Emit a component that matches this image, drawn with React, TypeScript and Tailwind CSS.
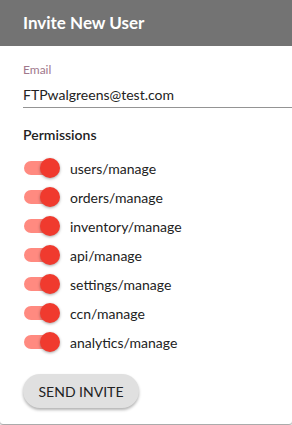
const permissions = [
  'users/manage',
  'orders/manage',
  'inventory/manage',
  'api/manage',
  'settings/manage',
  'ccn/manage',
  'analytics/manage',
];

function Toggle() {
  return (
    <span className="relative inline-block h-5 w-[38px] shrink-0">
      <span className="absolute left-[1px] top-[3px] h-[14px] w-[34px] rounded-full bg-[#ff8a80]" />
      <span className="absolute left-[17px] top-0 h-5 w-5 rounded-full bg-[#f03a2e] shadow-[0_1px_3px_rgba(0,0,0,0.35)]" />
    </span>
  );
}

export default function App() {
  return (
    <div className="h-[425px] w-[292px] overflow-hidden bg-white font-['Lato','Open_Sans',sans-serif] text-[#222]">
      <div className="h-[424px] overflow-hidden rounded-b-[3px] bg-white shadow-[0_1px_2px_rgba(0,0,0,0.45)]">
        <header className="flex h-[46px] items-center bg-[#737373] px-[23px]">
          <h1 className="text-[17px] font-bold text-white">Invite New User</h1>
        </header>

        <div className="pl-[23px]">
          <div className="mt-[17px] border-b border-[#949494] pb-[2px]">
            <label className="block text-[12px] leading-[14px] text-[#a0788c]">Email</label>
            <div className="mt-[8px] text-[14px] leading-[20px]">FTPwalgreens@test.com</div>
          </div>

          <h2 className="mt-[17px] text-[14px] font-semibold leading-[20px]">Permissions</h2>

          <ul className="mt-[13px] flex flex-col gap-[9px]">
            {permissions.map((p) => (
              <li key={p} className="flex h-5 items-center gap-[9px]">
                <Toggle />
                <span className="text-[14px]">{p}</span>
              </li>
            ))}
          </ul>

          <button
            type="button"
            className="mt-[22px] h-[34px] w-[116px] rounded-full bg-[#e0e0e0] text-[14px] uppercase text-[#222] shadow-[0_2px_3px_rgba(0,0,0,0.3)]"
          >
            Send Invite
          </button>
        </div>
      </div>
    </div>
  );
}
